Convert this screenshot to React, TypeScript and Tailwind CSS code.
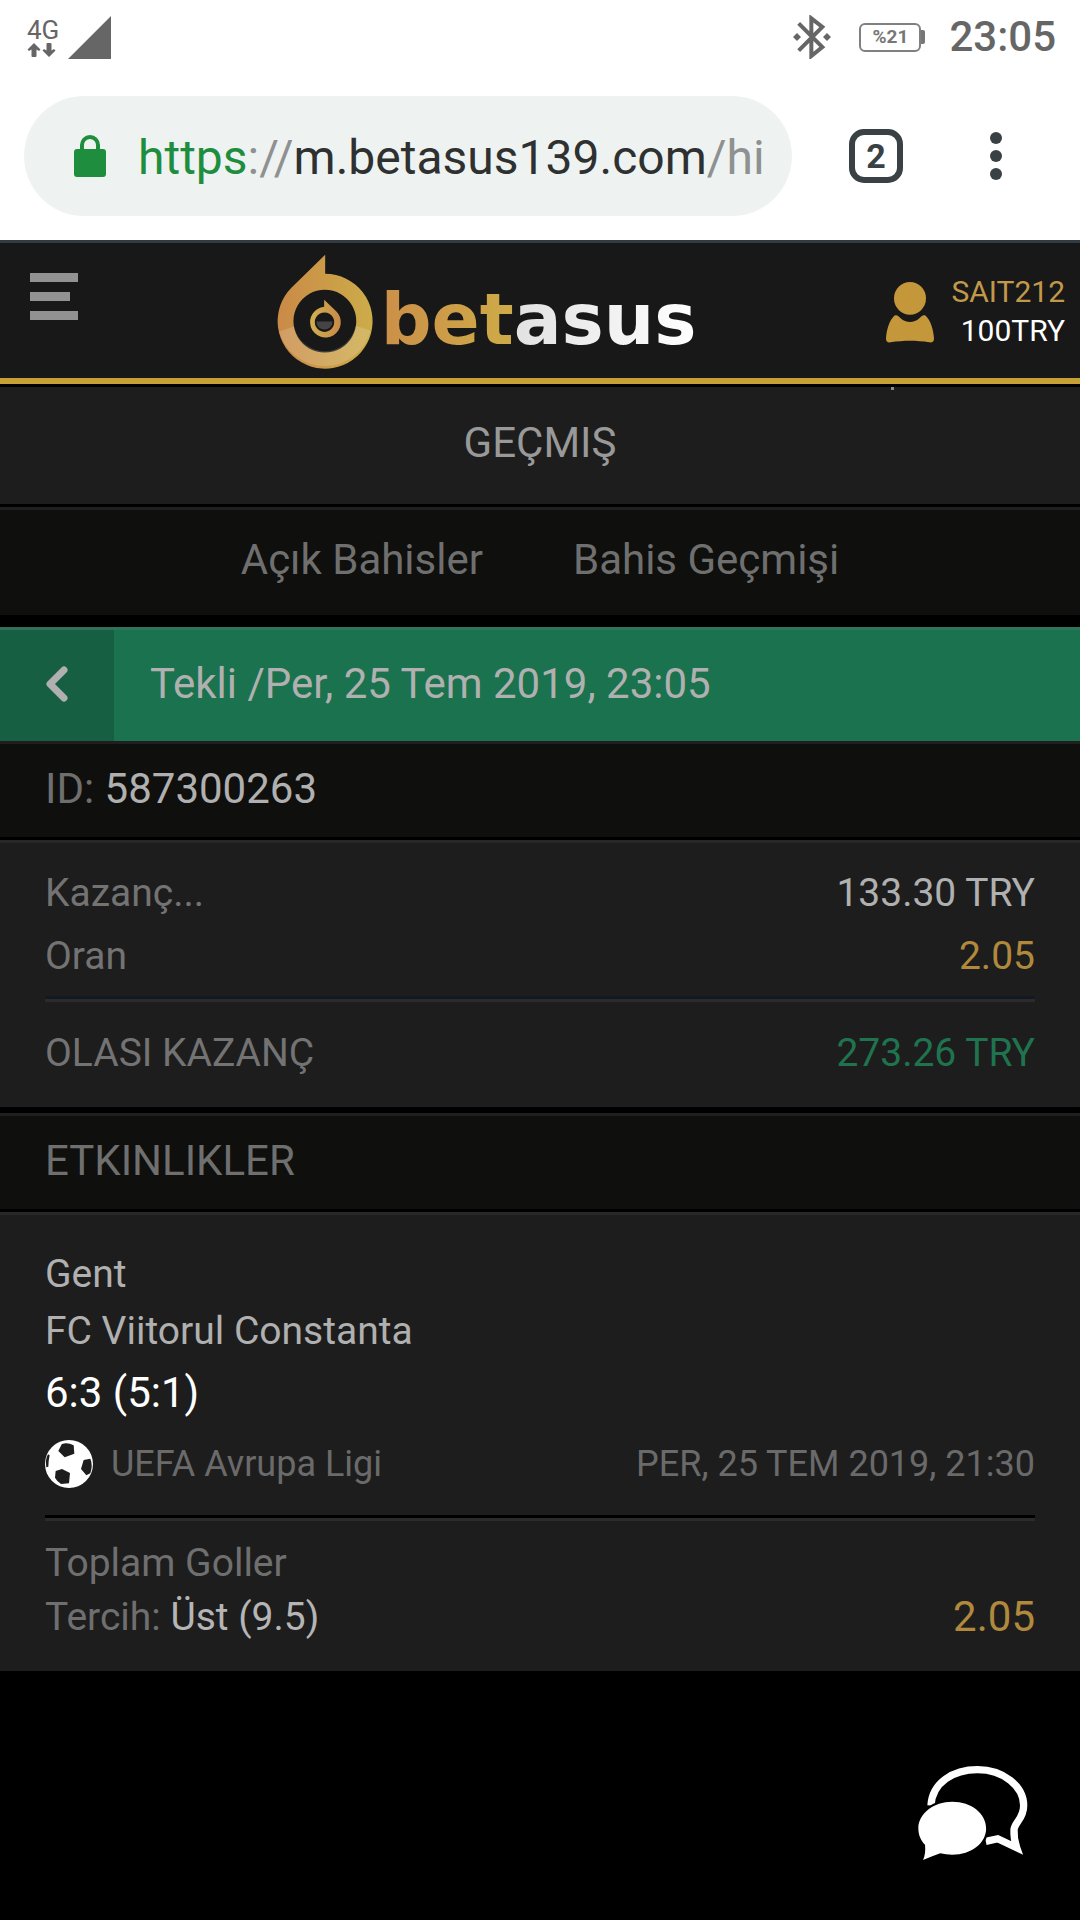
import React from 'react';

interface RowProps {
  label: string;
  value: string;
  valueClass: string;
  rowClass?: string;
}

const StatusBar: React.FC = () => {
  return (
    <div className="flex h-[72px] items-center justify-between bg-white pt-[2px] pl-[27px] pr-6 text-[#666666]">
      <div className="flex items-center gap-[9px]">
        <div className="flex flex-col">
          <span className="text-[26px] leading-[26px]">4G</span>
          <svg className="h-[14px] w-[30px]" viewBox="0 0 30 14" fill="currentColor" aria-hidden="true">
            <path d="M7 0 13.500 6.500 12 8 9.500 6.500V13a1 1 0 0 1-1 1h-3a1 1 0 0 1-1-1V6.500L2 8 .500 6.500z" />
            <path d="M22 14 15.500 7.500 17 6l2.500 1.500V1a1 1 0 0 1 1-1h3a1 1 0 0 1 1 1v6.500L27 6l1.500 1.500z" />
          </svg>
        </div>
        <svg className="h-[43px] w-[43px]" viewBox="0 0 43 43" fill="currentColor" aria-hidden="true">
          <path d="M0 43 43 0v43z" />
        </svg>
      </div>
      <div className="flex items-center">
        <svg className="h-[44px] w-[38px]" viewBox="0 0 114 132" fill="none" aria-hidden="true">
          <path
            d="M17 25 88 96 55 123V10l33 26-71 71"
            stroke="currentColor"
            strokeWidth="12"
          />
          <path d="m12 54 12 12-12 12L0 66zM102 54l12 12-12 12-12-12z" fill="currentColor" />
        </svg>
        <div className="ml-7 flex items-center">
          <span className="flex h-[29px] w-[62px] items-center justify-center rounded-[6px] border-2 border-[#808080] text-[19px] leading-[24px] font-bold text-[#777777]">
            %21
          </span>
          <span className="h-[14px] w-[4px] rounded-r-[2px] bg-[#777777]" />
        </div>
        <time className="ml-6 text-[42px] leading-[48px] font-medium">23:05</time>
      </div>
    </div>
  );
};

const AddressBar: React.FC = () => {
  return (
    <div className="flex h-[168px] items-center bg-white pl-6 pr-[60px]">
      <button
        type="button"
        className="flex h-[120px] min-w-0 flex-1 items-center overflow-hidden rounded-full bg-[#eef3f2] pl-[50px] text-left"
      >
        <svg className="h-[42px] w-[32px] shrink-0" viewBox="0 0 32 42" aria-hidden="true">
          <rect y="14" width="32" height="28" rx="3" fill="#1e8e3e" />
          <path d="M8 16v-6a8 8 0 0 1 16 0v6" fill="none" stroke="#1e8e3e" strokeWidth="4" />
        </svg>
        <span className="ml-8 pt-[3px] text-[48px] leading-[60px] whitespace-nowrap text-[#8f9191]">
          <span className="text-[#1e8e3e]">https</span>://
          <span className="text-[#2f3131]">m.betasus139.com</span>/hi
        </span>
      </button>
      <button
        type="button"
        aria-label="Sekmeler"
        className="ml-[57px] flex h-[54px] w-[54px] items-center justify-center rounded-[15px] border-6 border-[#3a4144] text-[34px] leading-[42px] font-bold text-[#3a4144]"
      >
        2
      </button>
      <button type="button" aria-label="Menü" className="ml-[69px] flex w-[48px] flex-col items-center gap-[6px]">
        <span className="h-3 w-3 rounded-full bg-[#3a4144]" />
        <span className="h-3 w-3 rounded-full bg-[#3a4144]" />
        <span className="h-3 w-3 rounded-full bg-[#3a4144]" />
      </button>
    </div>
  );
};

const Logo: React.FC = () => {
  return (
    <a href="#" className="flex pt-[10px] pl-2">
      <svg className="h-[117px] w-[97px] shrink-0" viewBox="50 40 290 350" aria-hidden="true">
        <defs>
          <linearGradient id="flame" x1="0" x2="1">
            <stop offset="0" stopColor="#ca8a47" />
            <stop offset="1" stopColor="#ccac49" />
          </linearGradient>
          <linearGradient id="flameInner" x1="0" x2="1">
            <stop offset="0" stopColor="#d0b050" />
            <stop offset="1" stopColor="#ca8a47" />
          </linearGradient>
        </defs>
        <path
          d="M197 45V102A142 142 0 1 1 96 144ZM196 150a94 94 0 1 0 .1 0Z"
          fill="url(#flame)"
          fillRule="evenodd"
        />
        <path
          d="M59 275A142 142 0 0 0 333 272L288 258A94 94 0 0 1 104 260Z"
          fill="#ffffff"
          fillOpacity="0.16"
        />
        <path
          d="M194 180 230 214A46 46 0 1 1 194 201ZM195 218a29 29 0 1 0 .1 0Z"
          fill="url(#flameInner)"
          fillRule="evenodd"
        />
        <path d="M171 245H219A24 24 0 0 1 171 245Z" fill="#444444" />
      </svg>
      <span className="ml-2 pt-[27px] font-['DejaVu_Sans'] text-[71px] leading-[80px] font-bold">
        <span className="bg-linear-to-r from-[#cc8f48] to-[#cdab48] bg-clip-text text-transparent">bet</span>
        <span className="bg-linear-to-r from-[#e2e2e2] to-white bg-clip-text text-transparent">asus</span>
      </span>
    </a>
  );
};

const SiteHeader: React.FC = () => {
  return (
    <header className="flex h-[144px] items-start border-t-3 border-b-6 border-t-[#323a42] border-b-[#c6a035] bg-[#181818] pl-[30px] pr-[15px]">
      <button type="button" aria-label="Menüyü aç" className="mt-[30px] flex w-12 flex-col gap-[10px]">
        <span className="h-[9px] w-12 bg-[#929292]" />
        <span className="h-[9px] w-10 bg-[#929292]" />
        <span className="h-[9px] w-12 bg-[#929292]" />
      </button>
      <div className="flex flex-1 justify-center">
        <Logo />
      </div>
      <a href="#" className="mt-[29px] flex gap-[17px] text-right text-[30px] leading-[39px]">
        <svg className="mt-[10px] h-[61px] w-[48px]" viewBox="0 0 144 183" fill="#c4973a" aria-hidden="true">
          <ellipse cx="72" cy="49" rx="48" ry="49" />
          <path d="M25 101C33 97 38 103 44 109C60 124 84 124 100 109C106 103 111 97 119 101C134 114 143 145 144 170C144 179 139 182 130 181C90 175 54 175 14 181C5 182 0 179 0 170C1 145 10 114 25 101Z" />
        </svg>
        <span>
          <span className="block text-[#c2994a]">SAIT212</span>
          <span className="block text-white">100TRY</span>
        </span>
      </a>
    </header>
  );
};

const Row: React.FC<RowProps> = ({ label, value, valueClass, rowClass = 'leading-[63px]' }) => {
  return (
    <div className={`flex justify-between text-[39px] ${rowClass}`}>
      <dt className="text-[#737373]">{label}</dt>
      <dd className={valueClass}>{value}</dd>
    </div>
  );
};

const FootballIcon: React.FC = () => {
  return (
    <svg className="h-12 w-12 shrink-0" viewBox="0 0 144 144" aria-hidden="true">
      <circle cx="72" cy="72" r="72" fill="#ffffff" />
      <g fill="#1d1d1d">
        <path d="M50 13Q66 6 86 16L88 41 59 52 40 33Z" />
        <path d="M51 87 75 99 72 130 48 132Q36 124 30 113L32 93Z" />
        <path d="M116 60 136 56Q144 75 136 100L124 106 108 87Z" />
        <path d="M9 43 14 46Q10 64 10 80L4 82Q0 58 9 43Z" />
      </g>
    </svg>
  );
};

const App: React.FC = () => {
  return (
    <div className="min-h-screen bg-black font-[Roboto,'Noto_Sans',sans-serif]">
      <StatusBar />
      <AddressBar />
      <SiteHeader />

      <main>
        <div className="relative border-y-3 border-black bg-[#1d1d1d]">
          <span className="absolute top-0 right-[186px] h-[3px] w-[3px] bg-[#8a8a8a]" />
          <h1 className="pb-[5px] text-center text-[42px] leading-[112px] text-[#999999]">GEÇMIŞ</h1>
        </div>

        <nav className="flex justify-center gap-[90px] border-t-3 border-[#1f1f1f] bg-[#0f0f0d] pb-[5px] text-[42px] leading-[100px] text-[#6f6f6f]">
          <a href="#">Açık Bahisler</a>
          <a href="#">Bahis Geçmişi</a>
        </nav>

        <div className="mt-3 flex h-[114px] bg-[#1b724f]">
          <button
            type="button"
            aria-label="Geri"
            className="flex w-[114px] items-center justify-center border-t-3 border-[#32705a] bg-[#175f43] pb-[3px]"
          >
            <svg className="h-[36px] w-[22px]" viewBox="0 0 22 36" fill="none" aria-hidden="true">
              <path d="M18 4 4 18l14 14" stroke="#b0b0b0" strokeWidth="7" strokeLinecap="round" strokeLinejoin="round" />
            </svg>
          </button>
          <h2 className="flex-1 border-t-3 border-[#2c755b] pl-9 text-[42px] leading-[107px] text-[#b0b0b0]">
            Tekli /Per, 25 Tem 2019, 23:05
          </h2>
        </div>

        <p className="border-t-3 border-b-3 border-t-[#1f1f1f] border-b-black bg-[#0f0f0d] px-[45px] pb-[3px] text-[42px] leading-[90px] text-[#6f6f6f]">
          ID: <span className="text-[#b0b0b0]">587300263</span>
        </p>

        <dl className="border-t-3 border-[#282828] bg-[#1d1d1d] px-[45px] pt-[19px] pb-[3px]">
          <Row label="Kazanç..." value="133.30 TRY" valueClass="text-[#b0b0b0]" />
          <Row label="Oran" value="2.05" valueClass="text-[#b0893d]" />
          <div className="mt-2 border-t-3 border-[#121923]">
            <div className="border-t-3 border-[#2b2b2b]">
              <Row
                label="OLASI KAZANÇ"
                value="273.26 TRY"
                valueClass="text-[#1f744f]"
                rowClass="leading-[102px]"
              />
            </div>
          </div>
        </dl>

        <h3 className="mt-[6px] border-t-3 border-b-3 border-t-[#1f1f1f] border-b-black bg-[#0f0f0d] px-[45px] pb-[3px] text-[42px] leading-[90px] text-[#6f6f6f]">
          ETKINLIKLER
        </h3>

        <section className="border-t-3 border-[#282828] bg-[#1d1d1d] px-[45px] pt-[31px] pb-[27px] text-[39px]">
          <p className="leading-[57px] text-[#b0b0b0]">Gent</p>
          <p className="leading-[57px] text-[#b0b0b0]">FC Viitorul Constanta</p>
          <p className="text-[42px] leading-[66px] text-white">6:3 (5:1)</p>
          <div className="mt-[14px] flex h-12 items-center text-[36px] leading-[48px] text-[#6a6a6a]">
            <FootballIcon />
            <span className="ml-[18px]">UEFA Avrupa Ligi</span>
            <time className="ml-auto">PER, 25 TEM 2019, 21:30</time>
          </div>
          <div className="mt-[27px] border-t-3 border-black">
            <div className="flex items-end justify-between border-t-3 border-[#2b2b2b] pt-[15px] leading-[54px]">
              <div className="text-[#6f6f6f]">
                <p>Toplam Goller</p>
                <p>
                  Tercih: <span className="text-[#b5b5b5]">Üst (9.5)</span>
                </p>
              </div>
              <span className="text-[42px] text-[#b0893d]">2.05</span>
            </div>
          </div>
        </section>
      </main>

      <button type="button" aria-label="Canlı destek" className="fixed right-[50px] bottom-[58px]">
        <svg className="h-[98px] w-[113px]" viewBox="110 70 340 295" aria-hidden="true">
          <path
            d="M152 195C156 125 220 87 292 87C370 87 431 137 431 195C431 235 406 243 402 266C401 287 404 305 410 322L353 295L317 303"
            fill="none"
            stroke="#ffffff"
            strokeWidth="22"
          />
          <path
            d="M216 184C274 184 318 220 318 264C318 308 274 343 216 343Q197 343 180 339Q155 348 128 359Q137 340 134 313C120 298 114 282 114 264C114 220 160 184 216 184Z"
            fill="#ffffff"
            stroke="#000000"
            strokeWidth="14"
            paintOrder="stroke"
          />
        </svg>
      </button>
    </div>
  );
};

export default App;
